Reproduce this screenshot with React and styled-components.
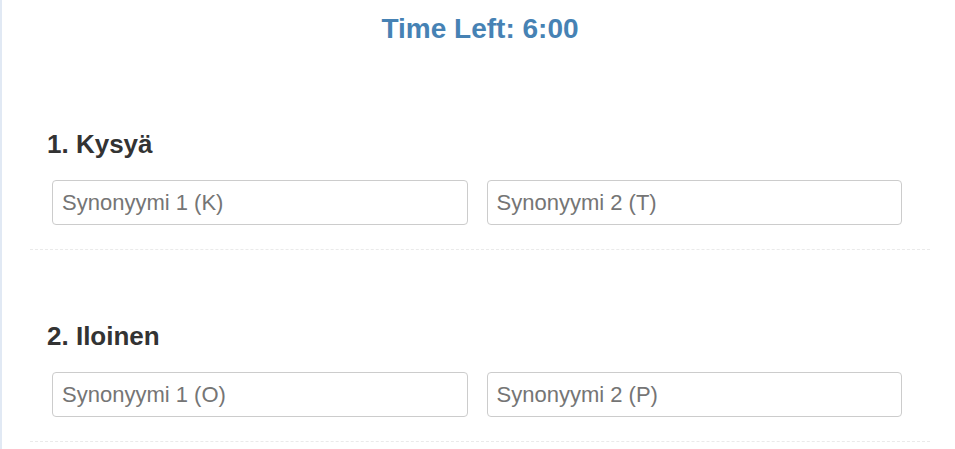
import styled, { createGlobalStyle } from 'styled-components';

const GlobalStyle = createGlobalStyle`
  html, body {
    margin: 0;
    padding: 0;
    background: #fff;
  }
  body {
    font-family: 'Liberation Sans', Arial, sans-serif;
  }
`;

const questions = [
  { id: 1, word: 'Kysyä', hints: ['K', 'T'] },
  { id: 2, word: 'Iloinen', hints: ['O', 'P'] },
];

export default function App() {
  return (
    <>
      <GlobalStyle />
      <Page>
        <Timer>Time Left: 6:00</Timer>
        {questions.map((q) => (
          <Question key={q.id}>
            <Word>
              {q.id}. {q.word}
            </Word>
            <Answers>
              {q.hints.map((h, i) => (
                <Answer
                  key={h}
                  type='text'
                  placeholder={`Synonyymi ${i + 1} (${h})`}
                />
              ))}
            </Answers>
          </Question>
        ))}
      </Page>
    </>
  );
}

const Page = styled.main`
  min-height: 100vh;
  box-sizing: border-box;
  border-left: 2px solid #e1e9f4;
  padding: 13px 25px 0 28px;
  overflow: hidden;
`;

const Timer = styled.h1`
  margin: 0 0 13px;
  font-size: 28px;
  line-height: 32px;
  font-weight: 700;
  text-align: center;
  color: #4682b4;
`;

const Question = styled.section`
  padding: 70px 0 24px;
  border-bottom: 1px dashed #eaeaea;
`;

const Word = styled.h2`
  margin: 0 0 20px;
  padding-left: 17px;
  font-size: 26px;
  line-height: 32px;
  font-weight: 700;
  color: #333;
`;

const Answers = styled.div`
  display: grid;
  grid-template-columns: 1fr 1fr;
  column-gap: 19px;
  padding: 0 28px 0 22px;
`;

const Answer = styled.input`
  box-sizing: border-box;
  width: 100%;
  height: 45px;
  padding: 0 9px;
  border: 1px solid #ccc;
  border-radius: 4px;
  font-family: 'Liberation Sans', Arial, sans-serif;
  font-size: 22px;
  color: #333;
  outline: none;
  &::placeholder {
    color: #757575;
  }
`;
